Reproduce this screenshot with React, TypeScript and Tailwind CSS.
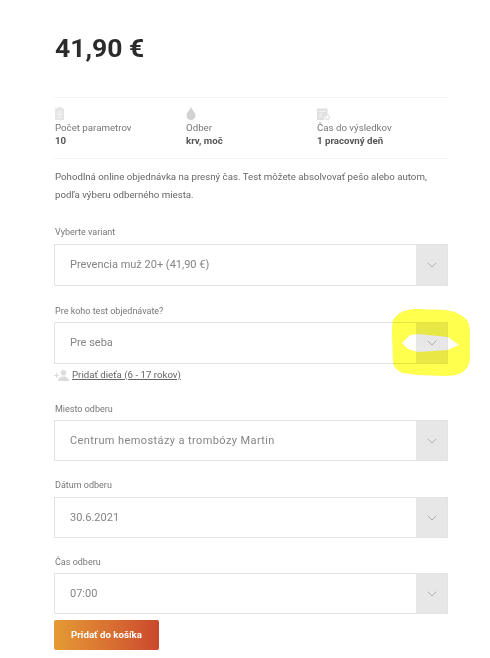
import { ChevronDown } from 'lucide-react';

interface SelectFieldProps {
  label: string;
  value: string;
  labelClass: string;
  boxClass: string;
  valueClass?: string;
}

function SelectField({ label, value, labelClass, boxClass, valueClass = '' }: SelectFieldProps) {
  return (
    <div>
      <div className={`pl-px text-[9px] leading-[12px] text-[#777] ${labelClass}`}>{label}</div>
      <div className={`flex border border-[#e3e3e3] bg-white ${boxClass}`}>
        <div className={`flex-1 flex items-center pl-[15px] text-[11px] text-[#858585] ${valueClass}`}>{value}</div>
        <div className="w-[31px] bg-[#e7e7e7] flex items-center justify-center">
          <ChevronDown className="w-[16px] h-[16px] text-[#b0b0b0]" strokeWidth={1.5} />
        </div>
      </div>
    </div>
  );
}

export default function App() {
  return (
    <div className="relative w-[490px] h-[658px] overflow-hidden bg-white font-['Roboto',sans-serif]">
      <div className="pl-[54px] w-[448px]">
        <h1 className="pl-px pt-[30px] text-[26.5px] leading-[36px] font-bold text-[#2b2b2b]">41,90 €</h1>

        {/* Params */}
        <div className="mt-[31px] h-[62px] border-y border-[#f5f5f5] grid grid-cols-[131px_131px_1fr] pt-[9px] pl-px text-[9.7px] leading-[13px]">
          <div>
            <svg width="9" height="13" viewBox="0 0 9 13" fill="#e4e4e4" className="mb-px">
              <path d="M2.500 0h4v1.500H9V13H0V1.500h2.500z" />
              <path d="M2 5h5M2 7.500h5M2 10h5" stroke="#fff" strokeWidth="0.7" />
            </svg>
            <div className="text-[#777]">Počet parametrov</div>
            <div className="font-bold text-[#555]">10</div>
          </div>
          <div>
            <svg width="10" height="13" viewBox="0 0 10 13" fill="#d2d2d2" className="mb-px">
              <path d="M5 0C4 3 .5 5.500 .5 8.500a4.500 4.500 0 0 0 9 0C9.500 5.500 6 3 5 0z" />
            </svg>
            <div className="text-[#777]">Odber</div>
            <div className="font-bold text-[#555]">krv, moč</div>
          </div>
          <div>
            <svg width="13" height="13" viewBox="0 0 13 13" fill="#e0e0e0" className="mb-px">
              <path d="M0 1.500h10.500v6a3.500 3.500 0 0 0-3 5.500H0z" />
              <path d="M2 4.500h7M2 7h4M2 9.500h3" stroke="#fff" strokeWidth="0.7" />
              <circle cx="10.300" cy="10.300" r="2.200" fill="none" stroke="#d6d6d6" />
            </svg>
            <div className="text-[#777]">Čas do výsledkov</div>
            <div className="font-bold text-[#555]">1 pracovný deň</div>
          </div>
        </div>

        <p className="mt-[9px] pl-px text-[9.7px] leading-[18px] text-[#666]">
          Pohodlná online objednávka na presný čas. Test môžete absolvovať pešo alebo autom,
          <br />
          podľa výberu odberného miesta.
        </p>

        <SelectField label="Vyberte variant" value="Prevencia muž 20+ (41,90 €)" labelClass="mt-[22px] mb-[6px]" boxClass="h-[42px]" />
        <SelectField label="Pre koho test objednávate?" value="Pre seba" labelClass="mt-[19px] mb-[5px]" boxClass="h-[42px]" />

        <div className="mt-[4px] flex items-center gap-[3px] text-[9.7px] leading-[14px] text-[#666]">
          <svg width="15" height="11" viewBox="0 0 15 11" fill="#dcdcdc">
            <circle cx="9.500" cy="2.800" r="2.800" />
            <path d="M4 11c0-3 2.500-4.500 5.500-4.500S15 8 15 11zM0 5h2V3h1v2h2v1H3v2H2V6H0z" />
          </svg>
          <span className="underline">Pridať dieťa (6 - 17 rokov)</span>
        </div>

        <SelectField
          label="Miesto odberu"
          value="Centrum hemostázy a trombózy Martin"
          valueClass="tracking-[0.4px] pt-px"
          labelClass="mt-[21px] mb-[5px]"
          boxClass="h-[41px]"
        />
        <SelectField label="Dátum odberu" value="30.6.2021" valueClass="pt-[2px]" labelClass="mt-[18px] mb-[6px]" boxClass="h-[41px]" />
        <SelectField label="Čas odberu" value="07:00" valueClass="pt-[2px]" labelClass="mt-[18px] mb-[5px]" boxClass="h-[41px]" />

        <button className="mt-[6px] w-[105px] h-[30px] rounded-[2px] bg-gradient-to-r from-[#e59a35] to-[#cb472d] text-[9.7px] font-bold text-white">
          Pridať do košíka
        </button>
      </div>

      {/* Yellow marker scribble on top of the screenshot */}
      <svg className="absolute left-[390px] top-[306px] mix-blend-multiply" width="82" height="72" viewBox="0 0 82 72">
        <path
          fillRule="evenodd"
          fill="#ffff4d"
          d="M10 7 C15 4 20 3 25 3 L55 4 C65 5 72 9 77 14 C79 18 80 22 80 27 L80 51 C80 58 77 63 73 66 C68 69 62 70 55 70 L28 69 L12 67 C7 64 4 61 3 57 L2 27 C2 21 2 17 3 14 C5 11 7 9 10 7 Z M12 37 L20 29 L28 28 L58 31 L69 39 L58 44 L28 46 L18 43 Z"
        />
      </svg>
    </div>
  );
}
